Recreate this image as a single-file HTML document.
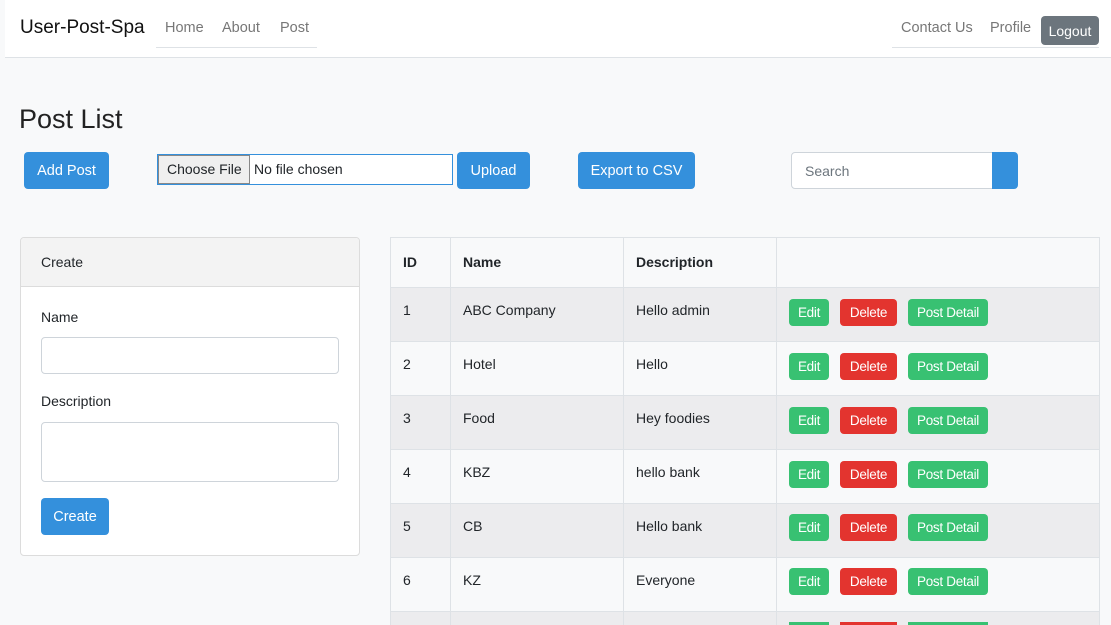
<!DOCTYPE html>
<html style="width:1111px;height:625px;overflow:hidden"><head><style>
*{box-sizing:border-box;margin:0;padding:0}
body{width:1111px;height:625px;overflow:hidden;background:#f8f9fa;font-family:"Liberation Sans",sans-serif;color:#212529;position:relative;font-size:14px}
.a{position:absolute}
.nav{left:5px;top:0;width:1106px;height:58px;background:#fff;border-bottom:1px solid #dee2e6}
.btn{position:absolute;color:#fff;border-radius:4px;display:flex;align-items:center;justify-content:center;font-size:14.5px}
.blue{background:#3490dc}
.sb{width:40px;height:27px;font-size:13.5px;letter-spacing:-.3px}
.g{background:#38c172}.r{background:#e3342f}
.tw{position:absolute;left:390px;top:237px;width:711px;height:388px;overflow:hidden}
table{border-collapse:collapse;width:710px}
td,th{border:1px solid #dee2e6;padding:14px 12px 0;text-align:left;vertical-align:top;height:54px;font-size:14px}
th{height:50px;font-weight:bold;background:#f8f9fa;padding-top:16px}
tr:nth-child(even) td{background:#ececee}
tr:nth-child(odd) td{background:#f8f9fa}
</style></head><body>
<div class="a nav"></div>
<div class="a" style="left:20px;top:17px;font-size:19px;color:#111">User-Post-Spa</div>
<div class="a" style="left:156px;top:47px;width:161px;height:1px;background:#dee2e6"></div>
<div class="a" style="left:165px;top:20px;font-size:14.5px;color:#777">Home</div>
<div class="a" style="left:222px;top:20px;font-size:14.5px;color:#777">About</div>
<div class="a" style="left:280px;top:20px;font-size:14.5px;color:#777">Post</div>
<div class="a" style="left:892px;top:47px;width:207px;height:1px;background:#dee2e6"></div>
<div class="a" style="left:901px;top:20px;font-size:14.5px;color:#777">Contact Us</div>
<div class="a" style="left:990px;top:20px;font-size:14.5px;color:#777">Profile</div>
<div class="btn" style="left:1041px;top:16px;width:58px;height:29px;background:#6c757d;font-size:14px">Logout</div>

<div class="a" style="left:19px;top:104px;font-size:27px;font-weight:300;color:#222">Post List</div>
<div class="btn blue" style="left:24px;top:152px;width:85px;height:37px">Add Post</div>
<div class="a" style="left:157px;top:154px;width:296px;height:31px;border:1px solid #3490dc;background:#fff"></div>
<div class="a" style="left:158px;top:155px;width:92px;height:29px;border:1px solid #888;background:#efefef;font-size:14px;padding:5px 0 0 8px">Choose File</div>
<div class="a" style="left:254px;top:161px;font-size:14px">No file chosen</div>
<div class="btn blue" style="left:457px;top:152px;width:73px;height:37px">Upload</div>
<div class="btn blue" style="left:578px;top:152px;width:117px;height:37px">Export to CSV</div>
<div class="a" style="left:791px;top:152px;width:206px;height:37px;border:1px solid #ced4da;border-radius:4px 0 0 4px;background:#fff;padding:10px 13px;color:#6c757d;font-size:14px">Search</div>
<div class="a" style="left:992px;top:152px;width:26px;height:37px;background:#3490dc;border-radius:0 4px 4px 0"></div>

<div class="a" style="left:20px;top:237px;width:340px;height:319px;border:1px solid #dcdcdc;border-radius:4px;background:#fff;overflow:hidden">
<div style="height:49px;background:#f3f3f3;border-bottom:1px solid #dcdcdc;padding:16px 20px;font-size:14px">Create</div>
</div>
<div class="a" style="left:41px;top:309px;font-size:14px">Name</div>
<div class="a" style="left:41px;top:337px;width:298px;height:37px;border:1px solid #ced4da;border-radius:4px;background:#fff"></div>
<div class="a" style="left:41px;top:393px;font-size:14px">Description</div>
<div class="a" style="left:41px;top:422px;width:298px;height:60px;border:1px solid #ced4da;border-radius:4px;background:#fff"></div>
<div class="btn blue" style="left:41px;top:498px;width:68px;height:37px">Create</div>

<div class="tw"><table>
<tr><th style="width:60px">ID</th><th style="width:173px">Name</th><th style="width:153px">Description</th><th></th></tr>
<tr><td>1</td><td>ABC Company</td><td>Hello admin</td><td></td></tr>
<tr><td>2</td><td>Hotel</td><td>Hello</td><td></td></tr>
<tr><td>3</td><td>Food</td><td>Hey foodies</td><td></td></tr>
<tr><td>4</td><td>KBZ</td><td>hello bank</td><td></td></tr>
<tr><td>5</td><td>CB</td><td>Hello bank</td><td></td></tr>
<tr><td>6</td><td>KZ</td><td>Everyone</td><td></td></tr>
<tr><td></td><td></td><td></td><td></td></tr>
</table></div>
<div id="bt"></div>
<script>
var ys=[299,353,407,461,514,568],h='';
ys.forEach(function(y){h+='<div class="btn sb g" style="left:789px;top:'+y+'px">Edit</div><div class="btn sb r" style="left:840px;top:'+y+'px;width:57px">Delete</div><div class="btn sb g" style="left:908px;top:'+y+'px;width:80px">Post Detail</div>';});
h+='<div class="a" style="left:789px;top:622px;width:40px;height:3px;background:#38c172"></div><div class="a" style="left:840px;top:622px;width:57px;height:3px;background:#e3342f"></div><div class="a" style="left:908px;top:622px;width:80px;height:3px;background:#38c172"></div>';
document.getElementById('bt').innerHTML=h;
</script>
</body></html>
